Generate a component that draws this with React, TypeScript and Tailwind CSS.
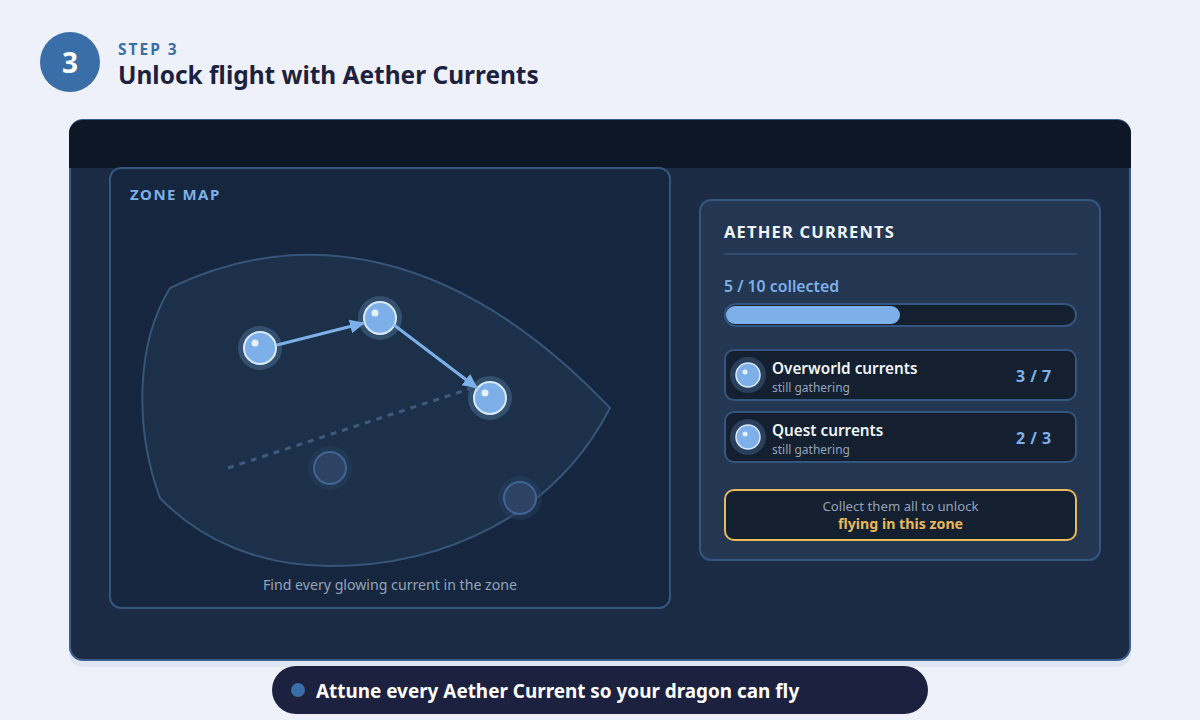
const FONT = "font-['Noto_Sans','Open_Sans',sans-serif]";

const Orb = ({ cx, cy }: { cx: number; cy: number }) => (
  <g>
    <circle cx={cx} cy={cy} r={22} fill="#34506f" />
    <circle cx={cx} cy={cy} r={16} fill="#7db0e8" stroke="#dbeafe" strokeWidth={2} />
    <circle cx={cx - 5} cy={cy - 5} r={3.5} fill="#e6f1fc" />
  </g>
);

const EmptyOrb = ({ cx, cy }: { cx: number; cy: number }) => (
  <g>
    <circle cx={cx} cy={cy} r={22} fill="#2b4464" opacity={0.4} />
    <circle cx={cx} cy={cy} r={16} fill="#2e4263" stroke="#3f6496" strokeWidth={2} />
  </g>
);

const ZoneMap = () => (
  <svg width={558} height={366} viewBox="111 209 558 366" className="mt-[5px] block">
    <defs>
      <marker id="head" markerWidth="16" markerHeight="14" refX="14" refY="7" orient="auto" markerUnits="userSpaceOnUse">
        <path d="M0 0 L15 7 L0 14 Z" fill="#7db0e8" />
      </marker>
    </defs>
    <path
      d="M170 288 C300 225 455 245 610 408 C555 515 445 566 330 566 C260 566 200 540 160 498 C135 430 135 345 170 288 Z"
      fill="#1c3049"
      stroke="#35557b"
      strokeWidth={2}
    />
    <line x1={228} y1={468} x2={472} y2={388} stroke="#3d5b80" strokeWidth={3} strokeDasharray="6 6" />
    <Orb cx={260} cy={348} />
    <Orb cx={380} cy={318} />
    <Orb cx={490} cy={398} />
    <EmptyOrb cx={330} cy={468} />
    <EmptyOrb cx={520} cy={498} />
    <line x1={277} y1={345} x2={364} y2={323} stroke="#7db0e8" strokeWidth={3} markerEnd="url(#head)" />
    <line x1={394} y1={325} x2={477} y2={388} stroke="#7db0e8" strokeWidth={3} markerEnd="url(#head)" />
  </svg>
);

const SmallOrb = () => (
  <svg width={36} height={36} viewBox="0 0 36 36" className="shrink-0">
    <circle cx={18} cy={18} r={18} fill="#2a3f5c" />
    <circle cx={18} cy={18} r={12} fill="#7db0e8" stroke="#dbeafe" strokeWidth={1.5} />
    <circle cx={15} cy={15} r={2.5} fill="#e6f1fc" />
  </svg>
);

const CurrentRow = ({ name, count }: { name: string; count: string }) => (
  <div className="flex h-[52px] items-center rounded-[10px] border-2 border-[#34557f] bg-[#141f2f] pl-[4px]">
    <SmallOrb />
    <div className="ml-[6px] flex-1 pt-[5px]">
      <div className="text-[15.3px] leading-[20px] font-semibold text-[#f0f5fb]">{name}</div>
      <div className="mt-px text-[12px] leading-[18px] text-[#94a3b8]">still gathering</div>
    </div>
    <div className="w-[59px] pt-[2px] text-[16px] font-bold tracking-[0.5px] text-[#7db0e8]">{count}</div>
  </div>
);

export default function App() {
  return (
    <div className={`relative h-[720px] w-[1200px] overflow-hidden bg-[#eef1f9] ${FONT}`}>
      <header className="flex items-start gap-[18px] pt-[32px] pl-[40px]">
        <div className="flex h-[60px] w-[60px] items-center justify-center rounded-full bg-[#3a6ea8] text-[28px] font-bold text-white">
          3
        </div>
        <div className="mt-[8px]">
          <div className="text-[15.5px] leading-[18px] font-bold tracking-[2px] text-[#3a6ea8]">STEP 3</div>
          <h1 className="mt-[2px] text-[24.45px] leading-[30px] font-bold text-[#1c2140]">Unlock flight with Aether Currents</h1>
        </div>
      </header>

      <main className="mt-[27px] ml-[69px] h-[542px] w-[1062px] rounded-[14px] border-2 border-[#3a5f8f] bg-[#1b2b43] shadow-[0_6px_0_#e0e5f2]">
        <div className="-mx-[2px] -mt-[1px] h-[48px] rounded-t-[14px] bg-[#0d1726]" />
        <div className="flex items-start">
          <section className="-mt-[1px] ml-[38px] h-[442px] w-[562px] rounded-[12px] border-2 border-[#34557f] bg-[#16263e]">
            <div className="pt-[15px] pl-[19px] text-[15px] leading-[20px] font-bold tracking-[1.5px] text-[#7db0e8]">ZONE MAP</div>
            <ZoneMap />
            <div className="text-center text-[14.15px] leading-[20px] text-[#94a3b8]">Find every glowing current in the zone</div>
          </section>
          <section className="mt-[31px] ml-[28px] h-[362px] w-[402px] rounded-[12px] border-2 border-[#34557f] bg-[#243752] pr-[22px] pl-[23px]">
            <div className="mt-[21px] border-b-2 border-[#2f4b70] pb-[11px] text-[16.5px] leading-[20px] font-bold tracking-[1.2px] text-[#f0f5fb]">
              AETHER CURRENTS
            </div>
            <div className="mt-[21px] text-[15.8px] leading-[20px] font-semibold text-[#7db0e8]">5 / 10 collected</div>
            <div className="mt-[7px] h-[24px] rounded-full border-2 border-[#34557f] bg-[#141f2f] py-px">
              <div className="h-[18px] w-[174px] rounded-full bg-[#7db0e8]" />
            </div>
            <div className="mt-[22px] flex flex-col gap-[10px]">
              <CurrentRow name="Overworld currents" count="3 / 7" />
              <CurrentRow name="Quest currents" count="2 / 3" />
            </div>
            <div className="mt-[26px] flex h-[52px] flex-col items-center justify-center rounded-[10px] border-2 border-[#e8b95a] bg-[#141f2f]">
              <div className="text-[13.2px] leading-[18px] text-[#94a3b8]">Collect them all to unlock</div>
              <div className="text-[14.2px] leading-[18px] font-bold text-[#e8b95a]">flying in this zone</div>
            </div>
          </section>
        </div>
      </main>

      <div className="mx-auto mt-[5px] flex h-[48px] w-[656px] items-center rounded-full bg-[#1c2140] pl-[19px]">
        <span className="h-[14px] w-[14px] rounded-full bg-[#3a6ea8]" />
        <span className="ml-[11px] pt-[2px] text-[18.9px] font-bold text-white">Attune every Aether Current so your dragon can fly</span>
      </div>
    </div>
  );
}
